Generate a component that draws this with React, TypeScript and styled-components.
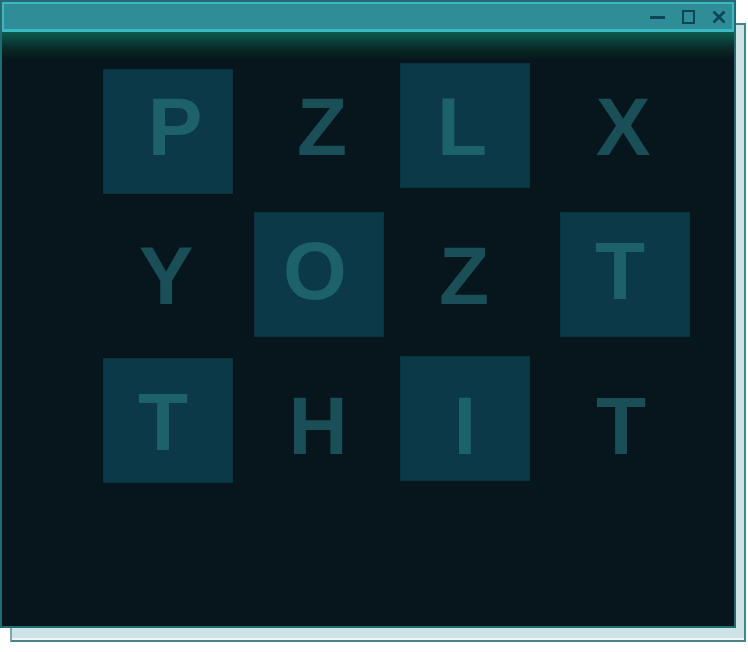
import styled, { createGlobalStyle } from 'styled-components'

const GlobalStyle = createGlobalStyle`
  html, body {
    margin: 0;
    padding: 0;
    background: #ffffff;
    font-family: 'Liberation Sans', Arial, sans-serif;
  }
`

type Cell = {
  letter: string
  filled?: boolean
  dx?: number
  dy?: number
  lx: number
  ly: number
}

// tile offsets (dx, dy) and letter offsets (lx, ly) give the board its hand-placed look
const cells: Cell[] = [
  { letter: 'P', filled: true, dx: 0, dy: 3, lx: 7, ly: -2 },
  { letter: 'Z', lx: 4, ly: -2 },
  { letter: 'L', filled: true, dx: -3, dy: -3, lx: -6, ly: -2 },
  { letter: 'X', lx: 5, ly: -2 },
  { letter: 'Y', lx: -2, ly: 1 },
  { letter: 'O', filled: true, dx: 1, dy: 0, lx: -3, ly: -4 },
  { letter: 'Z', lx: -4, ly: 1 },
  { letter: 'T', filled: true, dx: 7, dy: 0, lx: 2, ly: -4 },
  { letter: 'T', filled: true, dx: 0, dy: 0, lx: -5, ly: 1 },
  { letter: 'H', lx: 0, ly: 5 },
  { letter: 'I', filled: true, dx: -3, dy: -2, lx: -3, ly: 5 },
  { letter: 'T', lx: 3, ly: 5 },
]

export default function App() {
  return (
    <>
      <GlobalStyle />
      <Frame>
        <Shadow />
        <Window>
          <TitleBar>
            <Controls>
              <IconButton aria-label="Minimize">
                <svg width="16" height="16" viewBox="0 0 16 16">
                  <path d="M1 8.5h15" stroke="currentColor" strokeWidth="3" />
                </svg>
              </IconButton>
              <IconButton aria-label="Maximize">
                <svg width="16" height="16" viewBox="0 0 16 16">
                  <rect x="3" y="2" width="11" height="12" fill="none" stroke="currentColor" strokeWidth="2" />
                </svg>
              </IconButton>
              <IconButton aria-label="Close">
                <svg width="16" height="16" viewBox="0 0 16 16">
                  <path d="M2.5 2.5l11 11M13.5 2.5l-11 11" stroke="currentColor" strokeWidth="2.6" />
                </svg>
              </IconButton>
            </Controls>
          </TitleBar>
          <Content>
            <Board>
              {cells.map((c, i) => (
                <Square key={i}>
                  {c.filled && <Tile $dx={c.dx ?? 0} $dy={c.dy ?? 0} />}
                  <Letter $filled={!!c.filled} $lx={c.lx} $ly={c.ly}>
                    {c.letter}
                  </Letter>
                </Square>
              ))}
            </Board>
          </Content>
        </Window>
      </Frame>
    </>
  )
}

const Frame = styled.div`
  position: relative;
  width: 746px;
  height: 643px;
`

const Shadow = styled.div`
  position: absolute;
  left: 10px;
  top: 23px;
  width: 736px;
  height: 619px;
  box-sizing: border-box;
  background: #cde3e5;
  border: 2px solid #4b8488;
  border-left-color: #7ea8ab;
  box-shadow: inset 0 -2px 0 #eef7f7;
`

const Window = styled.div`
  position: relative;
  width: 736px;
  height: 628px;
  box-sizing: border-box;
  border: 2px solid #246a72;
  background: #07161d;
  display: flex;
  flex-direction: column;
`

const TitleBar = styled.div`
  height: 30px;
  flex-shrink: 0;
  box-sizing: border-box;
  background: #2e8d96;
  border: 2px solid #3cb8c2;
  border-bottom-width: 3px;
  display: flex;
  align-items: center;
  justify-content: flex-end;
`

const Controls = styled.div`
  display: flex;
  align-items: center;
  gap: 15px;
  padding-right: 5px;
`

const IconButton = styled.div`
  width: 16px;
  height: 16px;
  color: #0c4556;
  display: flex;

  svg {
    display: block;
  }
`

const Content = styled.div`
  flex: 1;
  background: linear-gradient(180deg, #0c5b4c 0px, #0b4a41 6px, #0a3333 13px, #08221f 20px, #07161d 28px);
`

const Board = styled.div`
  display: grid;
  grid-template-columns: repeat(4, 130px);
  grid-template-rows: repeat(3, 125px);
  column-gap: 20px;
  row-gap: 21px;
  padding: 34px 0 0 101px;
`

const Square = styled.div`
  display: grid;
  place-items: center;
`

const Tile = styled.div<{ $dx: number; $dy: number }>`
  grid-area: 1 / 1;
  width: 130px;
  height: 125px;
  box-sizing: border-box;
  background: #0c3948;
  border: 1px solid #0a3342;
  transform: translate(${(p) => p.$dx}px, ${(p) => p.$dy}px);
`

const Letter = styled.div<{ $filled: boolean; $lx: number; $ly: number }>`
  grid-area: 1 / 1;
  font-family: 'Liberation Sans', Arial, sans-serif;
  font-weight: 700;
  font-size: 82px;
  line-height: 1;
  color: ${(p) => (p.$filled ? '#1d616b' : '#1a4f58')};
  transform: translate(${(p) => p.$lx}px, ${(p) => p.$ly}px);
  position: relative;
`
